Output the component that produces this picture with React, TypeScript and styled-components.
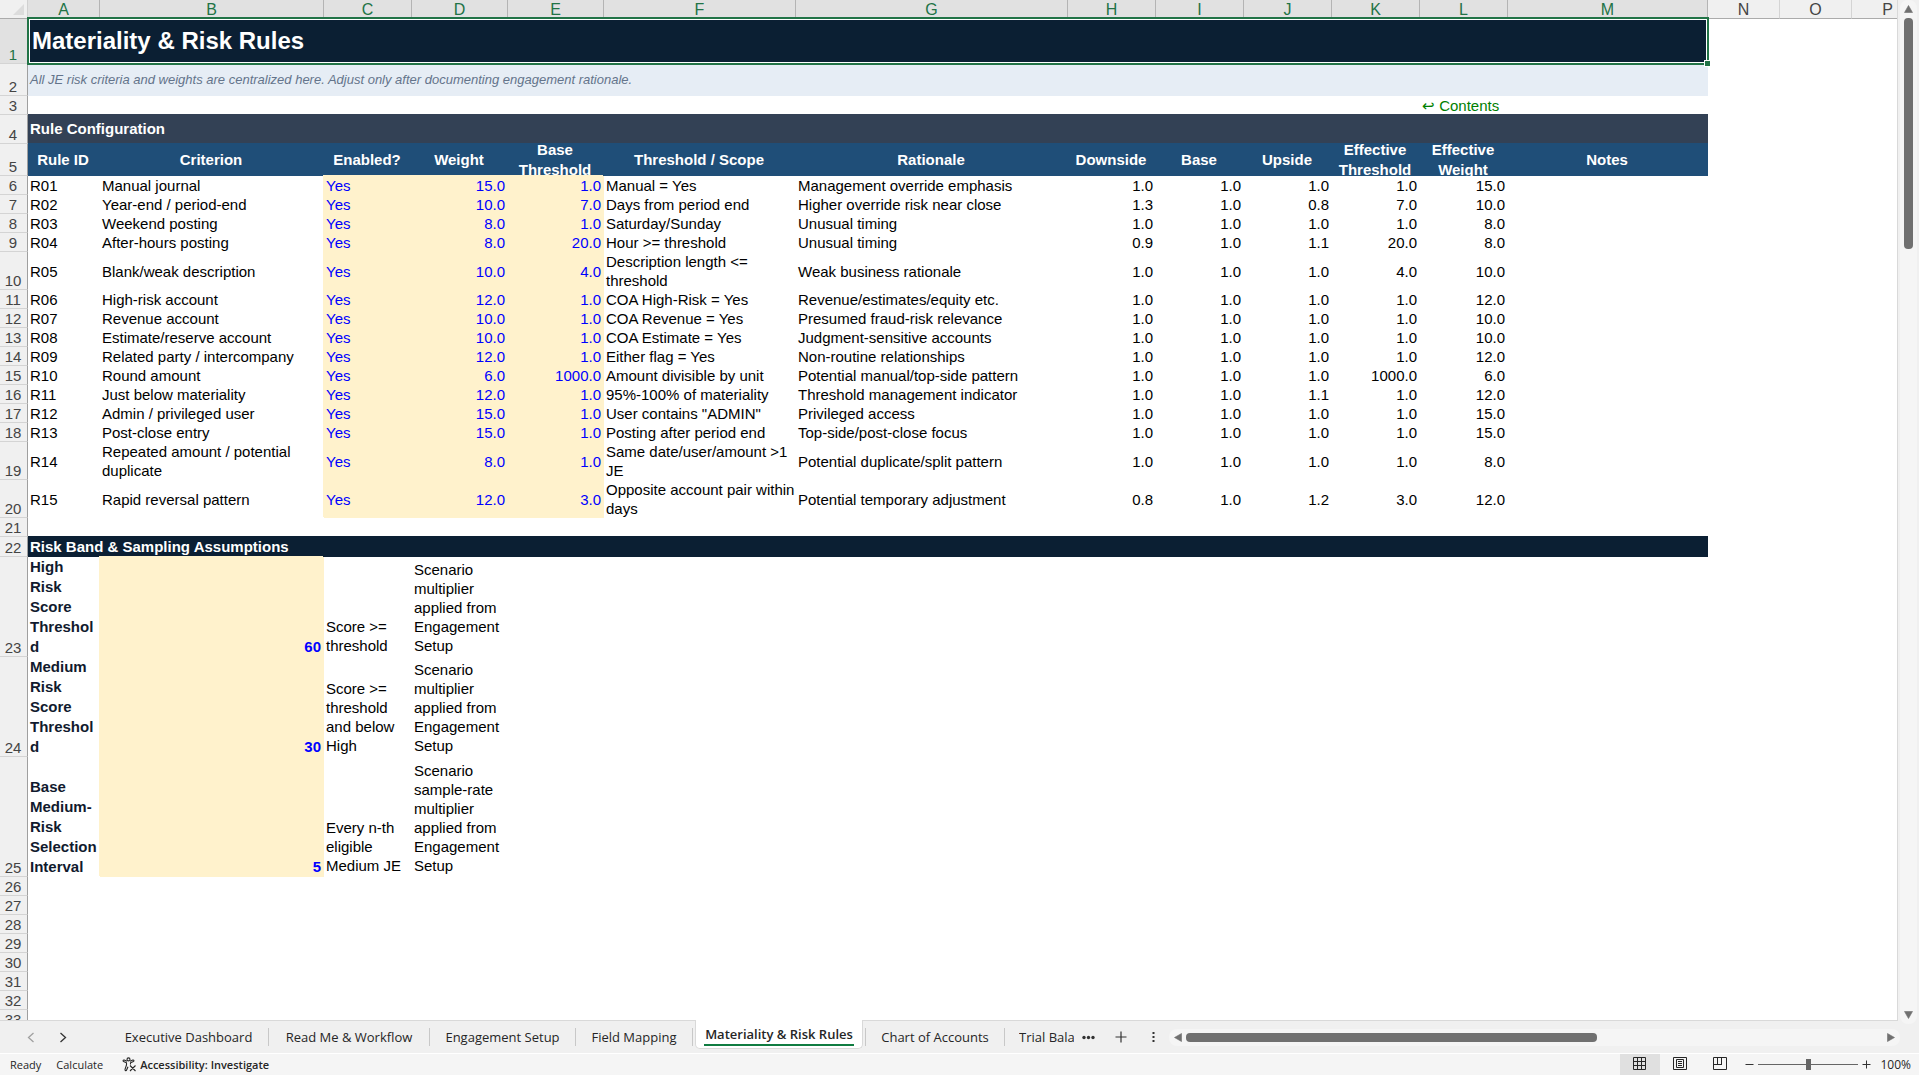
import React from "react";
import styled, { createGlobalStyle, css } from "styled-components";

const SHEET_FONT = '"Liberation Sans", Arial, sans-serif';
const UI_FONT = '"Open Sans", "Noto Sans", sans-serif';

const GlobalStyle = createGlobalStyle`
  *, *::before, *::after { box-sizing: border-box; }
  body { margin: 0; background: #f0f0f0; overflow: hidden; }
`;

const Window = styled.div`
  height: 100vh;
  display: flex;
  flex-direction: column;
  font-family: ${SHEET_FONT};
  background: #f0f0f0;
`;

const Workspace = styled.main`
  flex: 1;
  min-height: 0;
  display: flex;
`;

const Viewport = styled.div`
  flex: 1;
  min-width: 0;
  overflow: hidden;
  background: #ffffff;
  border-right: 1px solid #d9d9d9;
  border-bottom: 1px solid #d9d9d9;
`;

const Grid = styled.table`
  table-layout: fixed;
  width: 1924px;
  border-collapse: separate;
  border-spacing: 0;
  font-size: 15px;
  line-height: 19px;
  color: #000000;
`;

const Col = styled.col<{ $w: number }>`
  width: ${(p) => p.$w}px;
`;

const Row = styled.tr<{ $h: number }>`
  height: ${(p) => p.$h}px;
`;

const Corner = styled.td`
  padding: 0;
  height: 19px;
  background: #f0f0f0;
  border-right: 1px solid #d0d0d0;
  border-bottom: 1px solid #ababab;
  vertical-align: bottom;
  svg { display: block; margin: 0 3px 3px auto; }
`;

const ColumnHead = styled.th<{ $on: boolean }>`
  padding: 2px 0 0;
  font-weight: 400;
  font-size: 16px;
  line-height: 16px;
  text-align: center;
  background: ${(p) => (p.$on ? "#e1e1e1" : "#f0f0f0")};
  color: ${(p) => (p.$on ? "#217346" : "#444444")};
  border-right: 1px solid ${(p) => (p.$on ? "#b4b4b4" : "#d4d4d4")};
  border-bottom: 1px solid #ababab;
`;

const RowHead = styled.th<{ $on?: boolean }>`
  padding: 2px 3px 0 2px;
  font-weight: 400;
  font-size: 15px;
  line-height: 16px;
  text-align: center;
  vertical-align: bottom;
  background: ${(p) => (p.$on ? "#e1e1e1" : "#f0f0f0")};
  color: ${(p) => (p.$on ? "#217346" : "#444444")};
  border-right: 1px solid #9f9f9f;
  border-bottom: 1px solid #d4d4d4;
`;

type CellProps = { $align?: "left" | "right"; $input?: boolean; $bold?: boolean; $low?: boolean };

const Cell = styled.td<CellProps>`
  padding: 0 ${(p) => (p.$align === "right" ? 3 : 0)}px ${(p) => (p.$low && !p.$bold ? 2 : 0)}px 2px;
  text-align: ${(p) => p.$align || "left"};
  vertical-align: ${(p) => (p.$low ? "bottom" : "middle")};
  overflow-wrap: anywhere;
  ${(p) =>
    p.$bold &&
    css`
      padding-right: 3px;
      font-weight: 700;
      line-height: 20px;
      color: #111a2e;
    `}
  ${(p) =>
    p.$input &&
    css`
      background: #fff2cc;
      box-shadow: -1px -1px 0 #fff2cc;
      color: #0000ff;
    `}
`;

const Banner = styled.td<{ $tone: string }>`
  padding: 0 2px 1px;
  font-weight: 700;
  line-height: 18px;
  color: #ffffff;
  background: ${(p) => p.$tone};
  box-shadow: 0 -1px 0 ${(p) => p.$tone};
`;

const TitleCell = styled.td`
  position: relative;
  padding: 0 4px 2px;
  font-size: 24px;
  font-weight: 700;
  line-height: 28px;
  color: #ffffff;
  background: #0b1f33;
`;

const Title = styled.h1`
  margin: 0;
  font: inherit;
`;

const Selection = styled.span`
  position: absolute;
  inset: -2px -1px -1px;
  border: 2px solid #217346;
  box-shadow: inset 0 0 0 1px #ffffff;
  pointer-events: none;
  &::after {
    content: "";
    position: absolute;
    right: -4px;
    bottom: -4px;
    width: 7px;
    height: 7px;
    background: #217346;
    border: 1px solid #ffffff;
  }
`;

const Subtitle = styled.td`
  padding: 0 2px 1px;
  font-size: 13px;
  line-height: 16px;
  font-style: italic;
  color: #64748b;
  background: #e6edf5;
`;

const FieldHead = styled.th`
  padding: 0 4px 0 2px;
  color: #ffffff;
  background: #1f4e78;
  box-shadow: 0 -1px 0 #1f4e78;
`;

const FieldLabel = styled.div`
  height: 32px;
  overflow: hidden;
  display: flex;
  align-items: center;
  justify-content: center;
  line-height: 20px;
`;

const ContentsLink = styled.a`
  color: #008000;
  text-decoration: none;
  white-space: nowrap;
`;

const VerticalBar = styled.div`
  flex: none;
  width: 17px;
  margin: 0 2px -3px;
  padding: 5px 4px;
  display: flex;
  flex-direction: column;
  align-items: center;
  gap: 5px;
  border-radius: 8px;
  background: #f5f5f5;
  z-index: 1;
`;

const VerticalTrack = styled.div`
  flex: 1;
  width: 9px;
`;

const VerticalThumb = styled.div`
  height: 23.4%;
  border-radius: 4px;
  background: #707070;
`;

const ArrowButton = styled.button`
  flex: none;
  display: flex;
  padding: 0;
  border: 0;
  background: none;
`;

const TabBar = styled.nav`
  flex: none;
  height: 32px;
  display: flex;
  align-items: center;
  font-family: ${UI_FONT};
  font-size: 13px;
  color: #262626;
`;

const TabNav = styled.div`
  flex: none;
  width: 109px;
  padding-left: 26px;
  display: flex;
  gap: 22px;
`;

const IconButton = styled.button<{ $dim?: boolean; $w?: number }>`
  flex: none;
  display: flex;
  align-items: center;
  justify-content: center;
  width: ${(p) => p.$w || 10}px;
  height: 18px;
  padding: 0;
  border: 0;
  background: none;
  color: ${(p) => (p.$dim ? "#a0a0a0" : "#333333")};
`;

const Tab = styled.button<{ $w: number; $plain?: boolean }>`
  flex: none;
  width: ${(p) => p.$w}px;
  height: 18px;
  padding: 0;
  border: 0;
  border-right: ${(p) => (p.$plain ? "0" : "1px solid #c8c8c8")};
  background: none;
  font: inherit;
  line-height: 18px;
  color: inherit;
  white-space: nowrap;
  overflow: hidden;
`;

const CutTab = styled(Tab)`
  margin-left: 14px;
  text-align: left;
`;

const ActiveTab = styled.button`
  flex: none;
  align-self: flex-start;
  width: 168px;
  height: 29px;
  margin: -1px 2px 0;
  padding: 4px 8px 3px;
  border: 1px solid #d9d9d9;
  border-top: 0;
  border-radius: 0 0 5px 5px;
  background: #ffffff;
  font: inherit;
  font-weight: 600;
  line-height: 20px;
  color: #262626;
  white-space: nowrap;
`;

const ActiveLabel = styled.span`
  display: block;
  border-bottom: 2px solid #107c41;
`;

const HorizontalBar = styled.div`
  flex: 1;
  height: 17px;
  margin: 0 19px 0 3px;
  padding: 0 5px;
  display: flex;
  align-items: center;
  gap: 4px;
  border-radius: 8px;
  background: #f5f5f5;
`;

const HorizontalTrack = styled.div`
  flex: 1;
`;

const HorizontalThumb = styled.div`
  width: 59%;
  height: 9px;
  border-radius: 4px;
  background: #707070;
`;

const StatusBar = styled.footer`
  flex: none;
  height: 22px;
  display: flex;
  align-items: center;
  border-top: 1px solid #ffffff;
  background: #f5f5f5;
  font-family: ${UI_FONT};
  font-size: 11px;
  line-height: 20px;
  color: #262626;
`;

const StatusTexts = styled.div`
  flex: 1;
  display: flex;
  align-items: center;
  gap: 15px;
  padding-left: 10px;
`;

const StatusButton = styled.button`
  display: flex;
  align-items: center;
  gap: 3px;
  padding: 0 0 0 4px;
  border: 0;
  background: none;
  font: inherit;
  font-weight: 600;
  color: inherit;
`;

const ViewButton = styled.button<{ $on?: boolean }>`
  flex: none;
  width: 40px;
  height: 21px;
  display: flex;
  align-items: center;
  justify-content: center;
  padding: 0 0 2px;
  border: 0;
  background: ${(p) => (p.$on ? "#e0e0e0" : "none")};
  color: #262626;
`;

const ZoomGroup = styled.div`
  flex: none;
  display: flex;
  align-items: center;
  gap: 4px;
  margin-left: 5px;
`;

const ZoomSlider = styled.input`
  appearance: none;
  width: 100px;
  height: 12px;
  margin: 0;
  background: linear-gradient(#666666, #666666) center / 100% 1px no-repeat;
  &::-webkit-slider-thumb {
    appearance: none;
    width: 5px;
    height: 11px;
    background: #666666;
  }
`;

const ZoomValue = styled.output`
  width: 44px;
  padding-right: 8px;
  text-align: right;
  font-size: 12px;
`;

const columns: [string, number][] = [
  ["A", 72], ["B", 224], ["C", 88], ["D", 96], ["E", 96], ["F", 192], ["G", 272], ["H", 88],
  ["I", 88], ["J", 88], ["K", 88], ["L", 88], ["M", 200], ["N", 72], ["O", 72], ["P", 72],
];

const fields = [
  "Rule ID", "Criterion", "Enabled?", "Weight", "Base Threshold", "Threshold / Scope", "Rationale",
  "Downside", "Base", "Upside", "Effective Threshold", "Effective Weight", "Notes",
];

type Rule = [string, string, string, string, string, string, string, string, string, string, number?];

// id, criterion, weight, base threshold, scope, rationale, downside, base, upside, effective threshold, height
const rules: Rule[] = [
  ["R01", "Manual journal", "15.0", "1.0", "Manual = Yes", "Management override emphasis", "1.0", "1.0", "1.0", "1.0"],
  ["R02", "Year-end / period-end", "10.0", "7.0", "Days from period end", "Higher override risk near close", "1.3", "1.0", "0.8", "7.0"],
  ["R03", "Weekend posting", "8.0", "1.0", "Saturday/Sunday", "Unusual timing", "1.0", "1.0", "1.0", "1.0"],
  ["R04", "After-hours posting", "8.0", "20.0", "Hour >= threshold", "Unusual timing", "0.9", "1.0", "1.1", "20.0"],
  ["R05", "Blank/weak description", "10.0", "4.0", "Description length <= threshold", "Weak business rationale", "1.0", "1.0", "1.0", "4.0", 38],
  ["R06", "High-risk account", "12.0", "1.0", "COA High-Risk = Yes", "Revenue/estimates/equity etc.", "1.0", "1.0", "1.0", "1.0"],
  ["R07", "Revenue account", "10.0", "1.0", "COA Revenue = Yes", "Presumed fraud-risk relevance", "1.0", "1.0", "1.0", "1.0"],
  ["R08", "Estimate/reserve account", "10.0", "1.0", "COA Estimate = Yes", "Judgment-sensitive accounts", "1.0", "1.0", "1.0", "1.0"],
  ["R09", "Related party / intercompany", "12.0", "1.0", "Either flag = Yes", "Non-routine relationships", "1.0", "1.0", "1.0", "1.0"],
  ["R10", "Round amount", "6.0", "1000.0", "Amount divisible by unit", "Potential manual/top-side pattern", "1.0", "1.0", "1.0", "1000.0"],
  ["R11", "Just below materiality", "12.0", "1.0", "95%-100% of materiality", "Threshold management indicator", "1.0", "1.0", "1.1", "1.0"],
  ["R12", "Admin / privileged user", "15.0", "1.0", 'User contains "ADMIN"', "Privileged access", "1.0", "1.0", "1.0", "1.0"],
  ["R13", "Post-close entry", "15.0", "1.0", "Posting after period end", "Top-side/post-close focus", "1.0", "1.0", "1.0", "1.0"],
  ["R14", "Repeated amount / potential duplicate", "8.0", "1.0", "Same date/user/amount >1 JE", "Potential duplicate/split pattern", "1.0", "1.0", "1.0", "1.0", 38],
  ["R15", "Rapid reversal pattern", "12.0", "3.0", "Opposite account pair within days", "Potential temporary adjustment", "0.8", "1.0", "1.2", "3.0", 38],
];

const assumptions: [string, string, string, string, number][] = [
  ["High Risk Score Threshold", "60", "Score >= threshold", "Scenario multiplier applied from Engagement Setup", 100],
  ["Medium Risk Score Threshold", "30", "Score >= threshold and below High", "Scenario multiplier applied from Engagement Setup", 100],
  ["Base Medium-Risk Selection Interval", "5", "Every n-th eligible Medium JE", "Scenario sample-rate multiplier applied from Engagement Setup", 120],
];

const Arrow = ({ dir }: { dir: "up" | "down" | "left" | "right" }) => {
  const shape = {
    up: "M4.5 .5 8.5 7.5H.5Z",
    down: "M4.5 7.5 .5 .5H8.5Z",
    left: "M.5 4.5 7.5 .5V8.5Z",
    right: "M7.5 4.5 .5 .5V8.5Z",
  }[dir];
  const tall = dir === "left" || dir === "right";
  return (
    <svg width={tall ? 8 : 9} height={tall ? 9 : 8} aria-hidden="true">
      <path d={shape} fill="#707070" stroke="#707070" strokeLinejoin="round" strokeWidth=".6" />
    </svg>
  );
};

const Chevron = ({ next }: { next?: boolean }) => (
  <svg width="8" height="11" fill="none" stroke="currentColor" strokeWidth="1.3" aria-hidden="true">
    <path d={next ? "M1.5 1 6.5 5.5 1.5 10" : "M6.5 1 1.5 5.5 6.5 10"} />
  </svg>
);

export default function App() {
  return (
    <Window>
      <GlobalStyle />
      <Workspace>
        <Viewport>
          <Grid>
            <colgroup>
              <Col $w={28} />
              {columns.map(([name, w]) => (
                <Col key={name} $w={w} />
              ))}
            </colgroup>
            <thead>
              <Row $h={19}>
                <Corner>
                  <svg width="11" height="11" aria-hidden="true">
                    <path d="M11 0V11H0Z" fill="#dcdcdc" />
                  </svg>
                </Corner>
                {columns.map(([name], i) => (
                  <ColumnHead key={name} scope="col" $on={i < 13}>{name}</ColumnHead>
                ))}
              </Row>
            </thead>
            <tbody>
              <Row $h={45}>
                <RowHead scope="row" $on>1</RowHead>
                <TitleCell colSpan={13}>
                  <Title>Materiality &amp; Risk Rules</Title>
                  <Selection />
                </TitleCell>
              </Row>
              <Row $h={32}>
                <RowHead scope="row">2</RowHead>
                <Subtitle colSpan={13}>
                  All JE risk criteria and weights are centralized here. Adjust only after documenting engagement rationale.
                </Subtitle>
              </Row>
              <Row $h={19}>
                <RowHead scope="row">3</RowHead>
                <Cell colSpan={11} />
                <Cell><ContentsLink href="#contents">↩ Contents</ContentsLink></Cell>
              </Row>
              <Row $h={29}>
                <RowHead scope="row">4</RowHead>
                <Banner colSpan={13} $tone="#334155">Rule Configuration</Banner>
              </Row>
              <Row $h={32}>
                <RowHead scope="row">5</RowHead>
                {fields.map((name) => (
                  <FieldHead key={name} scope="col">
                    <FieldLabel>{name}</FieldLabel>
                  </FieldHead>
                ))}
              </Row>
              {rules.map(([id, criterion, weight, threshold, scope, why, down, base, up, effective, h], i) => (
                <Row key={id} $h={h || 19}>
                  <RowHead scope="row">{i + 6}</RowHead>
                  <Cell>{id}</Cell>
                  <Cell>{criterion}</Cell>
                  <Cell $input>Yes</Cell>
                  <Cell $input $align="right">{weight}</Cell>
                  <Cell $input $align="right">{threshold}</Cell>
                  <Cell>{scope}</Cell>
                  <Cell>{why}</Cell>
                  <Cell $align="right">{down}</Cell>
                  <Cell $align="right">{base}</Cell>
                  <Cell $align="right">{up}</Cell>
                  <Cell $align="right">{effective}</Cell>
                  <Cell $align="right">{weight}</Cell>
                </Row>
              ))}
              <Row $h={19}>
                <RowHead scope="row">21</RowHead>
              </Row>
              <Row $h={20}>
                <RowHead scope="row">22</RowHead>
                <Banner colSpan={13} $tone="#0b1f33">Risk Band &amp; Sampling Assumptions</Banner>
              </Row>
              {assumptions.map(([name, value, rule, note, h], i) => (
                <Row key={name} $h={h}>
                  <RowHead scope="row">{i + 23}</RowHead>
                  <Cell $low $bold>{name}</Cell>
                  <Cell $low $bold $input $align="right">{value}</Cell>
                  <Cell $low>{rule}</Cell>
                  <Cell $low>{note}</Cell>
                </Row>
              ))}
              {[26, 27, 28, 29, 30, 31, 32, 33].map((n) => (
                <Row key={n} $h={19}>
                  <RowHead scope="row">{n}</RowHead>
                </Row>
              ))}
            </tbody>
          </Grid>
        </Viewport>
        <VerticalBar>
          <ArrowButton aria-label="Scroll up"><Arrow dir="up" /></ArrowButton>
          <VerticalTrack><VerticalThumb /></VerticalTrack>
          <ArrowButton aria-label="Scroll down"><Arrow dir="down" /></ArrowButton>
        </VerticalBar>
      </Workspace>

      <TabBar aria-label="Sheets">
        <TabNav>
          <IconButton $dim aria-label="Previous sheets"><Chevron /></IconButton>
          <IconButton aria-label="Next sheets"><Chevron next /></IconButton>
        </TabNav>
        <Tab $w={160}>Executive Dashboard</Tab>
        <Tab $w={161}>Read Me &amp; Workflow</Tab>
        <Tab $w={146}>Engagement Setup</Tab>
        <Tab $w={117}>Field Mapping</Tab>
        <ActiveTab aria-current="page"><ActiveLabel>Materiality &amp; Risk Rules</ActiveLabel></ActiveTab>
        <Tab $w={1} aria-hidden="true" tabIndex={-1} />
        <Tab $w={139}>Chart of Accounts</Tab>
        <CutTab $w={55} $plain>Trial Balance</CutTab>
        <IconButton $w={28} aria-label="More sheets">
          <svg width="13" height="5" fill="currentColor" aria-hidden="true">
            <circle cx="2" cy="2.5" r="1.7" /><circle cx="6.5" cy="2.5" r="1.7" /><circle cx="11" cy="2.5" r="1.7" />
          </svg>
        </IconButton>
        <IconButton $w={38} aria-label="New sheet">
          <svg width="12" height="12" stroke="currentColor" strokeWidth="1.2" aria-hidden="true">
            <path d="M6 .5V11.5M.5 6H11.5" />
          </svg>
        </IconButton>
        <IconButton $w={26} aria-label="Resize tab area">
          <svg width="3" height="12" fill="currentColor" aria-hidden="true">
            <path d="M.5 1h2v2h-2zM.5 5h2v2h-2zM.5 9h2v2h-2z" />
          </svg>
        </IconButton>
        <HorizontalBar>
          <ArrowButton aria-label="Scroll left"><Arrow dir="left" /></ArrowButton>
          <HorizontalTrack><HorizontalThumb /></HorizontalTrack>
          <ArrowButton aria-label="Scroll right"><Arrow dir="right" /></ArrowButton>
        </HorizontalBar>
      </TabBar>

      <StatusBar>
        <StatusTexts>
          <span>Ready</span>
          <span>Calculate</span>
          <StatusButton>
            <svg width="15" height="15" fill="none" stroke="currentColor" strokeWidth="1.1" aria-hidden="true">
              <circle cx="6.5" cy="2.4" r="1.5" />
              <path d="M5 4.2 2.2 3C1 2.7.7 4 1.6 4.5L4.5 5.8V8L3 12.4C2.8 13.8 4.2 14 4.6 13L6 9.8M8 4.2 10.8 3C12 2.7 12.3 4 11.4 4.5L8.5 5.8V7.5M8 8.5 13.5 14M13.5 8.5 8 14" />
            </svg>
            Accessibility: Investigate
          </StatusButton>
        </StatusTexts>
        <ViewButton $on aria-label="Normal view">
          <svg width="14" height="14" fill="none" stroke="currentColor" aria-hidden="true">
            <path d="M.5 .5h12v12H.5zM4.5 .5v12M8.5 .5v12M.5 4.5h12M.5 8.5h12" />
          </svg>
        </ViewButton>
        <ViewButton aria-label="Page layout view">
          <svg width="14" height="14" fill="none" stroke="currentColor" aria-hidden="true">
            <path d="M.5 .5h13v12H.5zM3.5 2.5h7v8h-7zM5 4.5h4M5 6.5h4M5 8.5h4" />
          </svg>
        </ViewButton>
        <ViewButton aria-label="Page break preview">
          <svg width="14" height="14" fill="none" stroke="currentColor" aria-hidden="true">
            <path d="M.5 .5h13v12H.5zM4.5 .5v7M.5 7.5h8.5M8.5 .5v7" />
          </svg>
        </ViewButton>
        <ZoomGroup>
          <IconButton $w={9} aria-label="Zoom out">
            <svg width="9" height="9" stroke="currentColor" aria-hidden="true"><path d="M.5 4.5h8" /></svg>
          </IconButton>
          <ZoomSlider type="range" min={0} max={200} defaultValue={100} aria-label="Zoom" />
          <IconButton $w={9} aria-label="Zoom in">
            <svg width="9" height="9" stroke="currentColor" aria-hidden="true"><path d="M.5 4.5h8M4.5 .5v8" /></svg>
          </IconButton>
          <ZoomValue>100%</ZoomValue>
        </ZoomGroup>
      </StatusBar>
    </Window>
  );
}
